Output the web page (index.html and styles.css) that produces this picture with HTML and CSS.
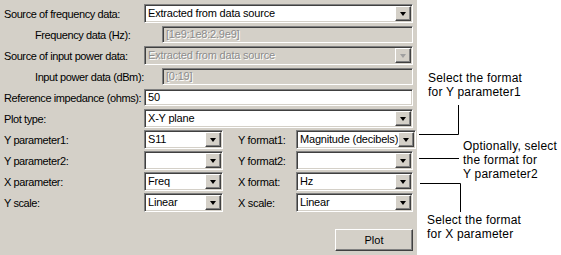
FILE: index.html
```html
<html lang="en"><head>
    <meta charset="UTF-8">
    <meta name="viewport" content="width=device-width, initial-scale=1.0">
    <title>Plot settings</title>

    <link rel="stylesheet" href="styles.css">
</head>

<body>
    <div class="page">
        <div class="panel">
            <div class="row">
                <span class="lbl">Source of frequency data:</span>
                <div class="field combo"><span class="val">Extracted from data source</span><span class="arrow"><i></i></span></div>
            </div>
            <div class="row">
                <span class="lbl sub">Frequency data (Hz):</span>
                <div class="field edit off"><span class="val">[1e9:1e8:2.9e9]</span></div>
            </div>
            <div class="row">
                <span class="lbl">Source of input power data:</span>
                <div class="field combo off"><span class="val">Extracted from data source</span><span class="arrow"><i></i></span></div>
            </div>
            <div class="row">
                <span class="lbl sub">Input power data (dBm):</span>
                <div class="field edit off"><span class="val">[0:19]</span></div>
            </div>
            <div class="row">
                <span class="lbl">Reference impedance (ohms):</span>
                <div class="field edit"><span class="val">50</span></div>
            </div>
            <div class="row">
                <span class="lbl">Plot type:</span>
                <div class="field combo"><span class="val">X-Y plane</span><span class="arrow"><i></i></span></div>
            </div>
            <div class="row">
                <span class="lbl">Y parameter1:</span>
                <div class="field combo small"><span class="val">S11</span><span class="arrow"><i></i></span></div>
                <span class="lbl2">Y format1:</span>
                <div class="field combo"><span class="val">Magnitude (decibels)</span><span class="arrow"><i></i></span></div>
            </div>
            <div class="row">
                <span class="lbl">Y parameter2:</span>
                <div class="field combo small"><span class="val"></span><span class="arrow"><i></i></span></div>
                <span class="lbl2">Y format2:</span>
                <div class="field combo"><span class="val"></span><span class="arrow"><i></i></span></div>
            </div>
            <div class="row">
                <span class="lbl">X parameter:</span>
                <div class="field combo small"><span class="val">Freq</span><span class="arrow"><i></i></span></div>
                <span class="lbl2">X format:</span>
                <div class="field combo"><span class="val">Hz</span><span class="arrow"><i></i></span></div>
            </div>
            <div class="row">
                <span class="lbl">Y scale:</span>
                <div class="field combo small"><span class="val">Linear</span><span class="arrow"><i></i></span></div>
                <span class="lbl2">X scale:</span>
                <div class="field combo"><span class="val">Linear</span><span class="arrow"><i></i></span></div>
            </div>
            <div class="actions">
                <button type="button" class="btn_plot">Plot</button>
            </div>
        </div>

        <div class="notes">
            <svg class="leaders" width="144" height="255" viewBox="0 0 144 255">
                <path d="M2 134.5H41.5V105" fill="none" stroke="#000" stroke-width="1"/>
                <path d="M2 158.5H42" fill="none" stroke="#000" stroke-width="1"/>
                <path d="M3 183.5H43.5V212" fill="none" stroke="#000" stroke-width="1"/>
            </svg>
            <div class="note note1">Select the format<br>for Y parameter1</div>
            <div class="note note2">Optionally, select<br>the format for<br>Y parameter2</div>
            <div class="note note3">Select the format<br>for X parameter</div>
        </div>
    </div>
</body>
</html>
```

FILE: styles.css
```css
body {
    margin: 0;
    background-color: #fff;
    overflow: hidden;
}

.page {
    display: flex;
    width: 561px;
    height: 255px;
}

.panel {
    box-sizing: border-box;
    width: 417px;
    height: 255px;
    padding: 3px 4px 0 4px;
    background-color: #d4d0c8;
    font-family: "Liberation Sans", Arial, sans-serif;
    font-size: 11px;
    color: #000;
}

.row {
    display: flex;
    align-items: center;
    height: 21px;
}

.lbl {
    flex: none;
    width: 140px;
    white-space: nowrap;
    letter-spacing: -0.4px;
}

.lbl.sub {
    width: 127px;
    padding-left: 31px;
}

.lbl2 {
    flex: none;
    width: 58px;
    margin-left: 15px;
    white-space: nowrap;
    letter-spacing: -0.3px;
}

/* sunken win32 style box */
.field {
    box-sizing: border-box;
    flex: 1;
    display: flex;
    padding: 1px;
    background-color: #fff;
    border: 1px solid;
    border-color: #808080 #fff #fff #808080;
    box-shadow: inset 1px 1px 0 #404040, inset -1px -1px 0 #d4d0c8;
}

.combo {
    height: 19px;
}

.edit {
    height: 17px;
}

.combo.small {
    flex: none;
    width: 79px;
}

.val {
    flex: 1;
    padding-left: 2px;
    line-height: 15px;
    white-space: nowrap;
    overflow: hidden;
    letter-spacing: -0.2px;
}

.edit .val {
    line-height: 13px;
}

.field.off {
    background-color: #d4d0c8;
}

.field.off .val {
    color: #8c8c8c;
    text-shadow: 1px 1px 0 #fff;
}

.arrow {
    box-sizing: border-box;
    flex: none;
    width: 16px;
    display: flex;
    justify-content: center;
    align-items: center;
    background-color: #d4d0c8;
    border: 1px solid;
    border-color: #fff #404040 #404040 #fff;
    box-shadow: inset -1px -1px 0 #808080;
}

.arrow i {
    width: 0;
    height: 0;
    margin-top: 1px;
    border-left: 3.5px solid transparent;
    border-right: 3.5px solid transparent;
    border-top: 4px solid #000;
}

.off .arrow i {
    border-top-color: #a0a0a0;
}

.actions {
    display: flex;
    justify-content: flex-end;
    margin-top: 16px;
}

.btn_plot {
    box-sizing: border-box;
    width: 78px;
    height: 22px;
    padding: 0;
    background-color: #d4d0c8;
    border: 1px solid;
    border-color: #fff #404040 #404040 #fff;
    box-shadow: inset -1px -1px 0 #808080;
    font-family: "Liberation Sans", Arial, sans-serif;
    font-size: 11px;
    color: #000;
}

.notes {
    position: relative;
    flex: 1;
    background-color: #fff;
}

.leaders {
    position: absolute;
    left: 0;
    top: 0;
}

.note {
    position: absolute;
    font-family: "Liberation Sans", Arial, sans-serif;
    font-size: 12px;
    line-height: 14px;
    letter-spacing: 0.2px;
    color: #000;
    white-space: nowrap;
}

.note1 {
    left: 11px;
    top: 71px;
}

.note2 {
    left: 46px;
    top: 139px;
}

.note3 {
    left: 10px;
    top: 213px;
}
```
